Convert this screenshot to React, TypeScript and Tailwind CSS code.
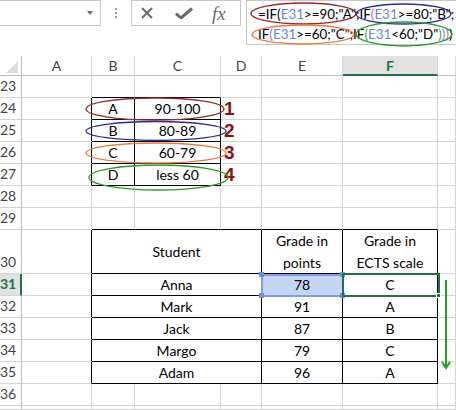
import type { ReactNode } from "react";

// column widths A..G and the sheet rows 23..37
const COL_W = "grid-cols-[22px_70px_43px_86px_41px_81px_95px_1fr]";
const LETTERS = ["A", "B", "C", "D", "E", "F", ""];
const ROWS = [23, 24, 25, 26, 27, 28, 29, 30, 31, 32, 33, 34, 35, 36, 37];

type Cell = { c: number; span?: number; text?: ReactNode; className?: string };

const num = "justify-start pl-[3px] text-[19px] font-bold text-[#8e1212] font-['Liberation_Sans',sans-serif]";

const content: Record<number, Cell[]> = {
  24: [{ c: 1, text: "A" }, { c: 2, text: "90-100" }, { c: 3, text: "1", className: num }],
  25: [{ c: 1, text: "B" }, { c: 2, text: "80-89" }, { c: 3, text: "2", className: num }],
  26: [{ c: 1, text: "C" }, { c: 2, text: "60-79" }, { c: 3, text: "3", className: num }],
  27: [{ c: 1, text: "D" }, { c: 2, text: "less 60" }, { c: 3, text: "4", className: num }],
  30: [
    { c: 1, span: 3, text: "Student" },
    { c: 4, text: <>Grade in<br />points</> },
    { c: 5, text: <>Grade in<br />ECTS scale</> },
  ],
  31: [{ c: 1, span: 3, text: "Anna" }, { c: 4, text: "78", className: "bg-[#c6d4f6]" }, { c: 5, text: "C" }],
  32: [{ c: 1, span: 3, text: "Mark" }, { c: 4, text: "91" }, { c: 5, text: "A" }],
  33: [{ c: 1, span: 3, text: "Jack" }, { c: 4, text: "87" }, { c: 5, text: "B" }],
  34: [{ c: 1, span: 3, text: "Margo" }, { c: 4, text: "79" }, { c: 5, text: "C" }],
  35: [{ c: 1, span: 3, text: "Adam" }, { c: 4, text: "96" }, { c: 5, text: "A" }],
};

const inTable = (r: number, c: number) =>
  (r >= 24 && r <= 27 && (c === 1 || c === 2)) || (r >= 30 && r <= 35 && c >= 1 && c <= 5);

const rowCells = (r: number) => {
  const defined = content[r] ?? [];
  const out: Cell[] = [];
  for (let c = 0; c < 7; c++) {
    const hit = defined.find((d) => d.c === c);
    if (hit) {
      out.push(hit);
      c += (hit.span ?? 1) - 1;
    } else out.push({ c });
  }
  return out;
};

const E31 = () => <span className="text-[#6a84de]">E31</span>;

const FormulaBar = () => (
  <div className="flex h-[56px] items-start">
    <div className="relative h-[26px] w-[101px] border border-l-0 border-[#c6c6c6]">
      <span className="absolute left-[87px] top-[10px] h-0 w-0 border-x-[3.5px] border-t-[4px] border-x-transparent border-t-[#6d6d6d]" />
    </div>
    <div className="ml-[14px] mt-[8px] flex w-[2px] flex-col gap-[2px]">
      <span className="size-[2px] bg-[#a0a0a0]" />
      <span className="size-[2px] bg-[#a0a0a0]" />
      <span className="size-[2px] bg-[#a0a0a0]" />
    </div>
    <div className="ml-[14px] flex h-[26px] w-[110px] items-center border border-[#c6c6c6]">
      <svg width="12" height="12" viewBox="0 0 12 12" className="ml-[9px]">
        <path d="M1 1 L11 11 M11 1 L1 11" stroke="#6b6b6b" strokeWidth="2" />
      </svg>
      <svg width="18" height="12" viewBox="0 0 18 12" className="ml-[22px]">
        <path d="M1 6.5 L6 11 L17 1.5" stroke="#6b6b6b" strokeWidth="3" fill="none" />
      </svg>
      <span className="ml-[19px] font-['Liberation_Serif',serif] text-[19px] italic leading-none text-[#6b6b6b]">fx</span>
    </div>
    <div className="ml-[5px] h-[45px] flex-1 border border-r-0 border-[#c6c6c6] pl-[11px] pt-[3px] font-['Lato',sans-serif] text-[13.4px] leading-[20px] whitespace-nowrap text-black">
      <div>
        =IF(<E31 />&gt;=90;"A";IF<span className="text-[#d45fae]">(</span><E31 />&gt;=80;"B";
      </div>
      <div>
        IF<span className="text-[#9a6fd8]">(</span><E31 />&gt;=60;"C";IF<span className="text-[#3aa53a]">(</span>
        <E31 />&lt;60;"D"<span className="text-[#3aa53a]">)</span><span className="text-[#9a6fd8]">)</span>
        <span className="text-[#d45fae]">)</span>)
      </div>
    </div>
  </div>
);

const Sheet = () => (
  <div
    className={`grid ${COL_W} grid-rows-[20px_repeat(7,22px)_44px_repeat(6,22px)_4px] font-['Lato',sans-serif] text-[14px] text-black`}
  >
    <div className="flex items-end justify-end border-r border-b border-[#bdbdbd] pr-[3px] pb-[2px]">
      <svg width="12" height="12" viewBox="0 0 12 12">
        <polygon points="12,0 12,12 0,12" fill="#dcdcdc" />
      </svg>
    </div>
    {LETTERS.map((l, i) =>
      l === "F" ? (
        <div
          key={i}
          className="flex items-center justify-center border-r border-[#d4d4d4] border-b-2 border-b-[#217346] bg-[#e1e1e1] font-bold text-[#217346]"
        >
          {l}
        </div>
      ) : (
        <div key={i} className="flex items-center justify-center border-r border-b border-r-[#d9d9d9] border-b-[#bdbdbd] text-[#444]">
          {l}
        </div>
      ),
    )}
    {ROWS.map((r) => (
      <div key={r} className="contents">
        {r === 31 ? (
          <div className="flex items-end border-b border-b-[#d4d4d4] border-r-2 border-r-[#217346] bg-[#e1e1e1] pb-[1px] font-bold text-[#217346]">
            {r}
          </div>
        ) : (
          <div className="flex items-end border-r border-b border-r-[#bdbdbd] border-b-[#d4d4d4] pb-[1px] text-[#444]">
            {r < 37 ? r : null}
          </div>
        )}
        {rowCells(r).map((cell) => {
          const last = cell.c + (cell.span ?? 1) - 1;
          const rb = inTable(r, last) || inTable(r, last + 1);
          const bb = inTable(r, cell.c) || inTable(r + 1, cell.c);
          return (
            <div
              key={cell.c}
              className={`flex items-center justify-center whitespace-nowrap text-center leading-[22px] border-r border-b ${
                rb ? "border-r-black" : "border-r-[#d4d4d4]"
              } ${bb ? "border-b-black" : "border-b-[#d4d4d4]"} ${cell.span === 3 ? "col-span-3" : ""} ${cell.className ?? ""}`}
            >
              {cell.text}
            </div>
          );
        })}
      </div>
    ))}
  </div>
);

const Overlay = () => (
  <div className="pointer-events-none absolute inset-0">
    <svg width="456" height="410" className="absolute inset-0" fill="none" strokeWidth="1.3">
      <ellipse cx="303.5" cy="13.5" rx="52.5" ry="10.5" stroke="#9b2a2a" />
      <ellipse cx="403.5" cy="14" rx="47.5" ry="10" stroke="#2a2a9b" />
      <ellipse cx="303" cy="34.5" rx="51" ry="9.5" stroke="#f07a3c" />
      <ellipse cx="404" cy="34" rx="48" ry="12" stroke="#2a9b2a" />
      <ellipse cx="155" cy="109" rx="69" ry="11" stroke="#9b2a2a" />
      <ellipse cx="156" cy="131" rx="70" ry="9.5" stroke="#2a2a9b" />
      <ellipse cx="156" cy="153" rx="70" ry="10" stroke="#f07a3c" />
      <ellipse cx="158.5" cy="177.5" rx="69.5" ry="12.5" stroke="#2a9b2a" />
      <line x1="446" y1="280" x2="446" y2="367" stroke="#22a022" strokeWidth="2" />
      <polyline points="442,362 446,368 450,362" stroke="#22a022" strokeWidth="2" />
    </svg>
    <div className="absolute left-[261px] top-[274px] h-[23px] w-[83px] border-2 border-[#7c9ee8]" />
    <span className="absolute left-[259px] top-[272px] size-[5px] bg-[#6b8ee6]" />
    <span className="absolute left-[340px] top-[272px] size-[5px] bg-[#6b8ee6]" />
    <span className="absolute left-[259px] top-[293px] size-[5px] bg-[#6b8ee6]" />
    <span className="absolute left-[340px] top-[293px] size-[5px] bg-[#6b8ee6]" />
    <div className="absolute left-[342px] top-[273px] h-[24px] w-[98px] border-2 border-[#217346]" />
    <span className="absolute left-[436px] top-[293px] size-[5px] border border-white bg-[#217346]" />
  </div>
);

export default function App() {
  return (
    <div className="relative h-[410px] w-[456px] overflow-hidden bg-white">
      <FormulaBar />
      <Sheet />
      <Overlay />
    </div>
  );
}
